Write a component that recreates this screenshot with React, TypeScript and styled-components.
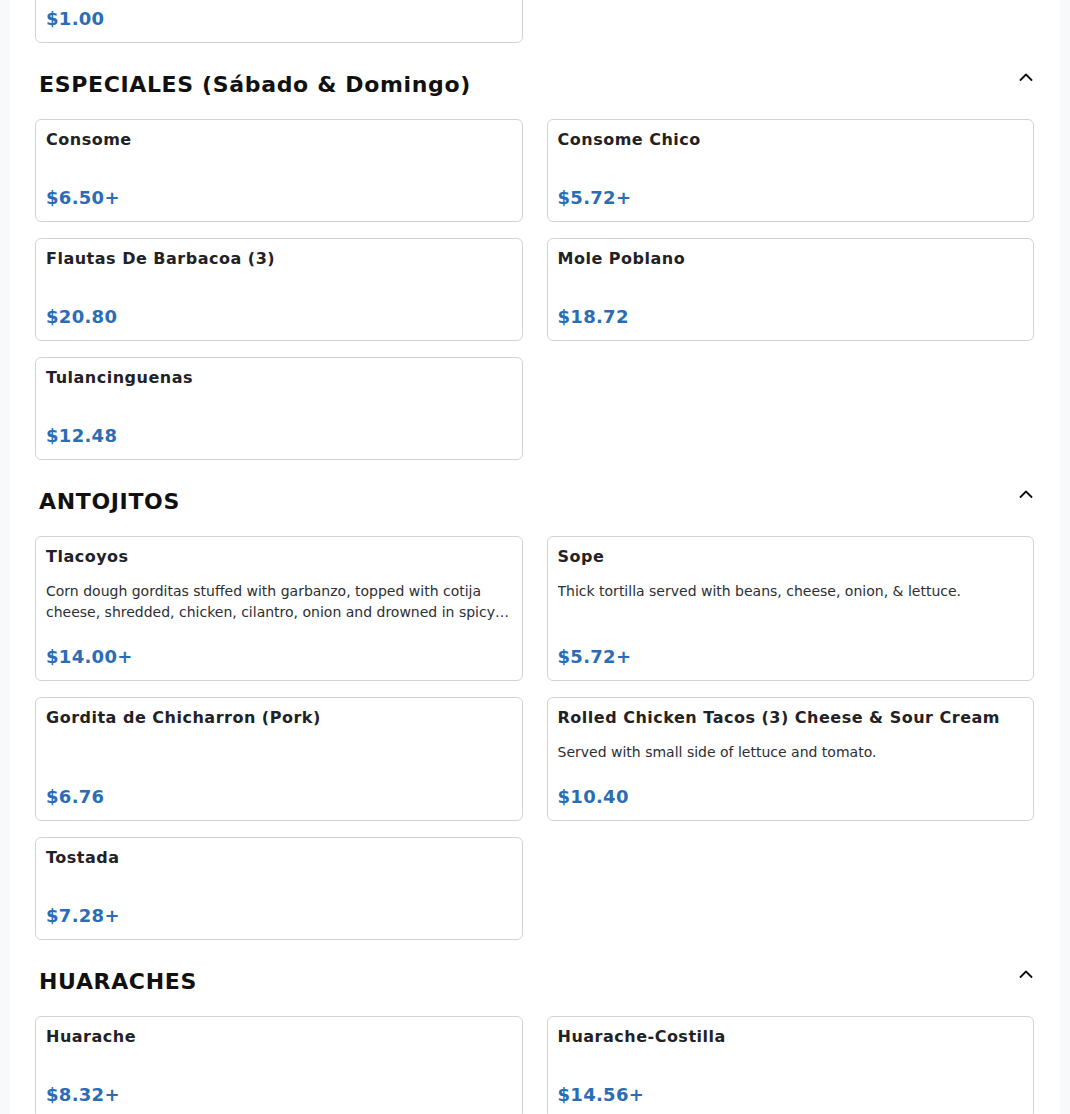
import * as React from 'react';
import styled, { createGlobalStyle } from 'styled-components';

interface Item {
  name: string;
  price: string;
  description?: string;
}

interface Section {
  title: string;
  items: Item[];
}

const sections: Section[] = [
  {
    title: 'EXTRAS',
    items: [{ name: 'Tortillas', price: '$1.00' }],
  },
  {
    title: 'ESPECIALES (Sábado & Domingo)',
    items: [
      { name: 'Consome', price: '$6.50+' },
      { name: 'Consome Chico', price: '$5.72+' },
      { name: 'Flautas De Barbacoa (3)', price: '$20.80' },
      { name: 'Mole Poblano', price: '$18.72' },
      { name: 'Tulancinguenas', price: '$12.48' },
    ],
  },
  {
    title: 'ANTOJITOS',
    items: [
      {
        name: 'Tlacoyos',
        price: '$14.00+',
        description:
          'Corn dough gorditas stuffed with garbanzo, topped with cotija cheese, shredded, chicken, cilantro, onion and drowned in spicy salsa verde.',
      },
      {
        name: 'Sope',
        price: '$5.72+',
        description: 'Thick tortilla served with beans, cheese, onion, & lettuce.',
      },
      { name: 'Gordita de Chicharron (Pork)', price: '$6.76' },
      {
        name: 'Rolled Chicken Tacos (3) Cheese & Sour Cream',
        price: '$10.40',
        description: 'Served with small side of lettuce and tomato.',
      },
      { name: 'Tostada', price: '$7.28+' },
    ],
  },
  {
    title: 'HUARACHES',
    items: [
      { name: 'Huarache', price: '$8.32+' },
      { name: 'Huarache-Costilla', price: '$14.56+' },
      { name: 'Huarache-Asada', price: '$14.56+' },
      { name: 'Huarache-Pollo', price: '$12.48+' },
    ],
  },
];

const GlobalStyle = createGlobalStyle`
  html, body {
    margin: 0;
    padding: 0;
    background: #f8f9fa;
    font-family: "DejaVu Sans", Verdana, sans-serif;
    color: #1f2226;
    overflow: hidden;
  }
`;

// the page is shown scrolled part way down the menu
const Page = styled.div`
  width: 1050px;
  margin: -108px 0 0 10px;
  background: #ffffff;
  padding: 0 26px 40px 25px;
  box-sizing: border-box;
`;

const SectionBlock = styled.section`
  padding-top: 28px;

  &:first-child {
    padding-top: 0;
  }
`;

const SectionHeader = styled.div`
  display: flex;
  align-items: flex-start;
  justify-content: space-between;
  padding: 0 1px 0 4px;
  margin-bottom: 20px;
`;

const SectionTitle = styled.h2`
  margin: 0;
  font-size: 22px;
  line-height: 28px;
  font-weight: 700;
  letter-spacing: 0.65px;
  color: #111;
`;

const Toggle = styled.button`
  border: 0;
  background: none;
  padding: 0;
  margin-top: -1px;
  width: 14px;
  height: 14px;
  display: flex;
  align-items: center;
  justify-content: center;
  cursor: pointer;
`;

const Grid = styled.div`
  display: grid;
  grid-template-columns: 1fr 1fr;
  column-gap: 24px;
  row-gap: 16px;
`;

const Card = styled.div`
  display: flex;
  flex-direction: column;
  border: 1px solid #d3d3d3;
  border-radius: 6px;
  padding: 10px 10px 12px;
  background: #fff;
`;

const ItemName = styled.div`
  font-size: 16px;
  line-height: 20px;
  font-weight: 700;
  letter-spacing: 0.5px;
  color: #1f2226;
`;

const ItemDescription = styled.div`
  margin: 14px 0 22px;
  font-size: 14px;
  line-height: 21px;
  color: #2b2e33;
  display: -webkit-box;
  -webkit-line-clamp: 2;
  -webkit-box-orient: vertical;
  overflow: hidden;
`;

const Price = styled.div`
  margin-top: auto;
  font-size: 18px;
  line-height: 23px;
  font-weight: 700;
  color: #2a6db5;
  letter-spacing: 0.3px;
`;

const Chevron: React.FC = () => (
  <svg width="14" height="8" viewBox="0 0 14 8" fill="none">
    <polyline points="1.5,7 7,1.5 12.5,7" stroke="#111" strokeWidth="1.8" strokeLinecap="round" strokeLinejoin="round" />
  </svg>
);

const MenuCard: React.FC<{ item: Item }> = ({ item }) => (
  <Card>
    <ItemName>{item.name}</ItemName>
    <ItemDescription>{item.description}</ItemDescription>
    <Price>{item.price}</Price>
  </Card>
);

const App: React.FC = () => {
  return (
    <>
      <GlobalStyle />
      <Page>
        {sections.map(section => (
          <SectionBlock key={section.title}>
            <SectionHeader>
              <SectionTitle>{section.title}</SectionTitle>
              <Toggle aria-label="Collapse section">
                <Chevron />
              </Toggle>
            </SectionHeader>
            <Grid>
              {section.items.map(item => (
                <MenuCard key={item.name} item={item} />
              ))}
            </Grid>
          </SectionBlock>
        ))}
      </Page>
    </>
  );
};

export default App;
